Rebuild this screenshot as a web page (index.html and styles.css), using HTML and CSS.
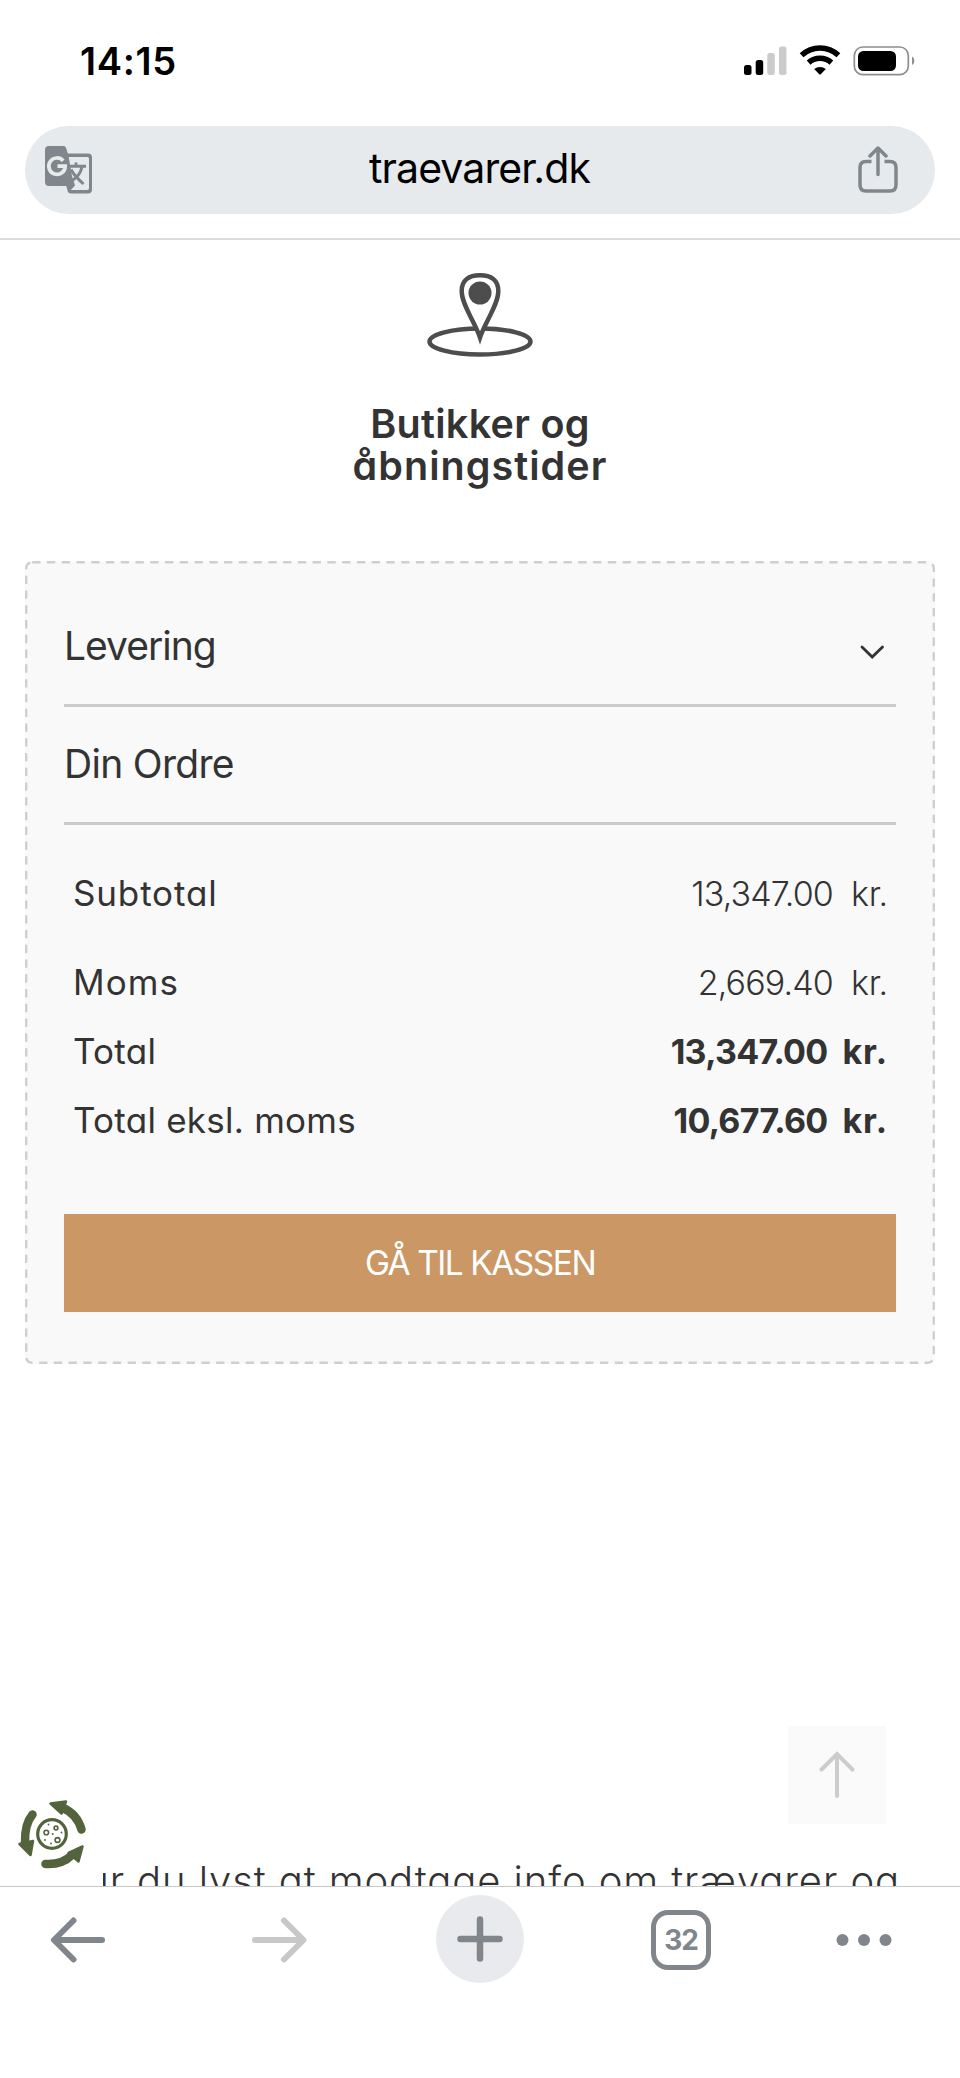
FILE: index.html
```html
<!DOCTYPE html>
<html lang="da">
<head>
<meta charset="utf-8">
<title>traevarer.dk</title>
<link rel="stylesheet" href="styles.css">
</head>
<body>
<div class="screen">
  <header class="status-bar">
    <span class="clock">14:15</span>
    <svg class="status-icons" width="174" height="34" viewBox="742 44 174 34">
      <rect x="744" y="65" width="7.5" height="10" rx="2.5"/>
      <rect x="755.700" y="60" width="7.500" height="15" rx="2.5"/>
      <rect x="767.300" y="53" width="7.500" height="22" rx="2.500" fill="#cbcbcb"/>
      <rect x="779" y="46.500" width="7.500" height="28.500" rx="2.500" fill="#cbcbcb"/>
      <g fill="none" stroke="#000" stroke-width="5.500">
        <path d="M801.600 55.200a27 27 0 0 1 36.800 0"/>
        <path d="M808.600 62.600a17 17 0 0 1 22.800 0"/>
      </g>
      <path d="M814.200 69a9 9 0 0 1 11.600 0l-5 5.200q-.8.8-1.600 0z"/>
      <rect x="854.300" y="47" width="54" height="27.600" rx="8.500" fill="none" stroke="#8f8f8f" stroke-width="1.700"/>
      <rect x="858" y="51" width="38" height="20" rx="5.500"/>
      <path d="M912 56.500a5 5 0 0 1 0 8.500z" fill="#8f8f8f"/>
    </svg>
  </header>
  <div class="address-row">
    <div class="address-bar">
      <svg width="48" height="48" viewBox="0 0 48 48">
        <path fill="#80868b" d="M4 0h14.500q2 0 2.600 2l1.700 5.500H43q4 0 4 4v32q0 4-4 4H25.500q-2 0-2.700-2L21.300 40H4q-4 0-4-4V4q0-4 4-4z"/>
        <path fill="#e6eaed" d="M23.700 11h18.600q1.700 0 1.700 1.700v29.500q0 1.800-1.700 1.800H25.800l4.200-4.500-3-9.500z"/>
        <path fill="none" stroke="#e6eaed" stroke-width="3.700" d="M18.200 14.800a8.200 8.200 0 1 0 2 5.400h-7.700"/>
        <path fill="none" stroke="#80868b" stroke-width="3" d="M22 20.300h19M31 16.500v3.500M37 21q-2 9-10.500 14M26 23.500q3 6 12.500 14.500"/>
      </svg>
      <span class="address">traevarer.dk</span>
      <svg width="40" height="48" viewBox="0 0 40 48" fill="none" stroke="#80868b" stroke-width="3.500">
        <path d="M13.500 15.500H8q-6 0-6 6v17.500q0 6 6 6h24q6 0 6-6V21.500q0-6-6-6h-5.500"/>
        <path stroke-linecap="round" stroke-linejoin="round" d="M20 28.500V2.500M12 10l8-8 8 8"/>
      </svg>
    </div>
  </div>
  <main class="page">
    <section class="stores">
      <svg width="108" height="86" viewBox="0 0 108 86" fill="none" stroke="#4d4d4d" stroke-width="4.500">
        <ellipse cx="54" cy="69.500" rx="50.500" ry="13"/>
        <path fill="#fff" d="M54 65.500C49 50 35.700 33 35.700 19 35.700 8 43 3.300 54 3.300S72.300 8 72.300 19C72.300 33 59 50 54 65.500z"/>
        <circle cx="54" cy="21" r="11.500" fill="#4d4d4d" stroke="none"/>
      </svg>
      <h2 class="stores-title"><span class="title-top">Butikker og</span><br><span class="title-bottom">åbningstider</span></h2>
    </section>
    <section class="card">
      <svg class="card-outline" width="910" height="803" viewBox="0 0 910 803">
        <rect x="1.200" y="1.200" width="907.600" height="800.600" rx="6" fill="none" stroke="#cfcfcf" stroke-width="2.400" stroke-dasharray="8.300 6.460"/>
      </svg>
      <div class="card-head">
        <span class="delivery">Levering</span>
        <svg class="chevron" width="26" height="16" viewBox="0 0 26 16" fill="none" stroke="#333" stroke-width="2.800" stroke-linecap="round"><path d="M3 3l10.200 10L23.500 3"/></svg>
      </div>
      <div class="card-head"><span class="order">Din Ordre</span></div>
      <div class="totals">
        <div class="row row-first"><span class="label-wide">Subtotal</span><span class="amount"><span>13,347.00</span><span class="unit">kr.</span></span></div>
        <div class="row"><span class="label-wider">Moms</span><span class="amount"><span>2,669.40</span><span class="unit">kr.</span></span></div>
        <div class="row"><span class="label">Total</span><span class="amount strong"><span>13,347.00</span><span class="unit">kr.</span></span></div>
        <div class="row"><span class="label">Total eksl. moms</span><span class="amount strong"><span>10,677.60</span><span class="unit">kr.</span></span></div>
      </div>
      <div class="checkout">GÅ TIL KASSEN</div>
    </section>
    <div class="to-top">
      <svg width="38" height="48" viewBox="0 0 38 48" fill="none" stroke="#ccc" stroke-width="4" stroke-linecap="round"><path d="M19 45V3.500M3.500 18.500L19 3l15.500 15.500"/></svg>
    </div>
    <p class="newsletter">Har du lyst at modtage info om trævarer og</p>
    <div class="cookie">
      <svg width="103" height="103" viewBox="0 0 103 103">
        <g fill="none" stroke="#53643c" stroke-width="8.500" stroke-linecap="round">
          <path d="M32.500 31.500Q24.500 41 25 60"/>
          <path d="M81.500 46.500Q77 31 63 25"/>
          <path d="M45.500 81Q62 82 72 72"/>
        </g>
        <g fill="#53643c" stroke="#53643c" stroke-width="2.500" stroke-linejoin="round">
          <path d="M19.500 61l13.500-3-2.500 14z"/>
          <path d="M50.500 20.500l15.500-2-4.500 12z"/>
          <path d="M68.500 70l14-6.500-4 15z"/>
        </g>
        <circle cx="52" cy="51" r="14.300" fill="#fff" stroke="#53643c" stroke-width="3.200"/>
        <g fill="none" stroke="#53643c" stroke-width="1.600">
          <circle cx="46.300" cy="49.500" r="2.300"/><circle cx="56" cy="45" r="1.900"/><circle cx="57.500" cy="57" r="2.400"/>
        </g>
        <g fill="#53643c"><circle cx="48.500" cy="41.500" r=".9"/><circle cx="52.700" cy="51" r=".9"/><circle cx="61.500" cy="49.500" r=".9"/><circle cx="45" cy="57" r=".9"/><circle cx="51" cy="60.500" r=".9"/></g>
      </svg>
    </div>
  </main>
  <nav class="toolbar">
    <svg width="60" height="52" viewBox="48 1914 60 52" fill="none" stroke="#80868b" stroke-width="6" stroke-linecap="round" stroke-linejoin="round"><path d="M102 1940H54.500M73.500 1920.500L54 1940l19.500 19.500"/></svg>
    <svg class="forward" width="60" height="52" viewBox="249 1914 60 52" fill="none" stroke="#c8c8c8" stroke-width="6" stroke-linecap="round" stroke-linejoin="round"><path d="M255 1940h48M284 1920.500l19.500 19.500-19.500 19.500"/></svg>
    <span class="new-tab"><svg width="48" height="48" viewBox="0 0 48 48" fill="none" stroke="#80868b" stroke-width="6.500" stroke-linecap="round"><path d="M24 4.500v39M4.500 24h39"/></svg></span>
    <span class="tabs">32</span>
    <svg class="more" width="58" height="14" viewBox="0 0 58 14" fill="#80868b"><circle cx="7.500" cy="7" r="6"/><circle cx="29" cy="7" r="6"/><circle cx="50.500" cy="7" r="6"/></svg>
  </nav>
</div>
</body>
</html>
```
FILE: styles.css
```css
* { box-sizing: border-box; }
body { margin: 0; background: #fff; }
svg { display: block; flex: none; }
.screen {
  width: 960px;
  height: 2078px;
  overflow: hidden;
  display: flex;
  flex-direction: column;
  font-family: Inter, "Open Sans", sans-serif;
  color: #333;
  white-space: nowrap;
}
.status-bar {
  height: 126px;
  padding: 43px 44px 0 80px;
  display: flex;
  justify-content: space-between;
  align-items: flex-start;
}
.status-icons { margin-top: 1px; }
.clock { font-size: 38px; font-weight: 600; line-height: 37px; letter-spacing: 0.700px; color: #000; }
.address-row { height: 114px; padding: 0 25px; border-bottom: 2px solid #dcdcdc; }
.address-bar {
  height: 88px;
  padding: 0 37px 0 20px;
  border-radius: 44px;
  background: #e6eaed;
  display: grid;
  grid-template-columns: 48px 1fr 40px;
  align-items: center;
}
.address {
  padding-left: 8px;
  margin-top: -4px;
  font-size: 41px;
  line-height: 50px;
  letter-spacing: -0.900px;
  color: #000;
  text-align: center;
}
.page {
  position: relative;
  height: 1646px;
  overflow: hidden;
  font-feature-settings: "cv11";
}
.stores { height: 321px; padding-top: 32px; display: flex; flex-direction: column; align-items: center; }
.stores-title { margin: 45px 0 0; font-size: 39.500px; line-height: 42px; font-weight: 600; text-align: center; }
.title-top { letter-spacing: 0.300px; }
.title-bottom { letter-spacing: 1.050px; }
.card { position: relative; margin: 0 25px; height: 803px; padding: 28px 39px 0; background: #f9f9f9; border-radius: 6px; }
.card-outline { position: absolute; left: 0; top: 0; }
.card-head {
  height: 118px;
  padding: 0 11px 2px 0;
  border-bottom: 3px solid #cbcbcb;
  display: flex;
  align-items: center;
  justify-content: space-between;
  font-size: 39px;
}
.delivery { letter-spacing: -1px; }
.order { letter-spacing: -0.700px; }
.chevron { margin-top: 12px; }
.totals { padding: 34px 8px 0 9px; font-size: 35px; }
.row { height: 69px; line-height: 69px; display: flex; justify-content: space-between; }
.row-first { height: 89px; }
.label { letter-spacing: 0.250px; }
.label-wide { letter-spacing: 0.850px; }
.label-wider { letter-spacing: 1.100px; }
.amount { display: flex; font-size: 34px; font-weight: 300; gap: 18px; letter-spacing: -0.850px; }
.strong { font-weight: 700; gap: 15px; letter-spacing: -0.700px; }
.unit { letter-spacing: -0.200px; }
.strong .unit { letter-spacing: 0.900px; }
.checkout {
  height: 98px;
  margin-top: 59px;
  background: #cb9765;
  color: #fff;
  font-size: 33.500px;
  letter-spacing: -1.500px;
  display: flex;
  align-items: center;
  justify-content: center;
}
.to-top {
  width: 98px;
  height: 98px;
  margin: 362px 74px 0 auto;
  background: #fafafa;
  display: flex;
  align-items: center;
  justify-content: center;
}
.newsletter {
  margin: 33px 60px 0 0;
  font-size: 40px;
  line-height: 48px;
  font-weight: 300;
  letter-spacing: 0.900px;
  text-align: right;
}
.cookie { position: absolute; left: 0; top: 1543px; width: 103px; height: 103px; background: #fff; }
.toolbar {
  height: 192px;
  padding: 9px 0 95px 48px;
  border-top: 1px solid #c8c8c8;
  display: flex;
  align-items: center;
}
.forward { margin-left: 141px; }
.new-tab {
  width: 88px;
  height: 88px;
  margin: -2px 127px 0;
  border-radius: 50%;
  background: #e8eaed;
  display: flex;
  align-items: center;
  justify-content: center;
}
.more { margin-left: 124px; }
.tabs {
  width: 60px;
  height: 60px;
  border: 5.500px solid #80868b;
  border-radius: 17px;
  display: flex;
  align-items: center;
  justify-content: center;
  font-size: 28px;
  font-weight: 700;
  letter-spacing: -1px;
  color: #80868b;
}
```
